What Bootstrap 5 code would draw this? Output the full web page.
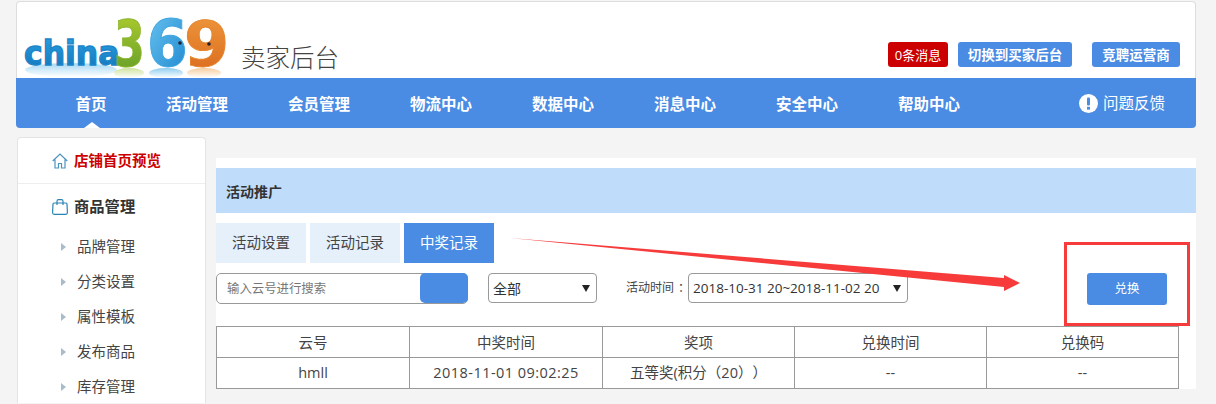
<!DOCTYPE html>
<html lang="zh"><head><meta charset="utf-8">
<link href="https://cdn.jsdelivr.net/npm/bootstrap@5.3.0/dist/css/bootstrap.min.css" rel="stylesheet">
<style>
html,body{height:404px;overflow:hidden}
body{background:#f4f4f4;font-family:"Open Sans","Noto Sans CJK SC",sans-serif;font-size:14.5px;color:#333}
.pagewrap{width:1180px;margin-left:16px;padding-top:1px;position:relative;height:404px;overflow:hidden}
.tophead{height:77px;background:#fff;border:1px solid #ddd;border-bottom:0;border-radius:4px 4px 0 0;padding-right:15px}
.logobox{width:216px;height:76px;flex:none}
.logobox svg{display:block}
.sellertitle{font-size:24.5px;font-weight:300;color:#444;line-height:30px;margin-top:41px;margin-left:8px}
.topbtn{height:25px;line-height:26px;border-radius:3px;color:#fff;font-size:13.5px;font-weight:700;background:#4a8be3;text-align:center}
.topbtns{margin-top:40px;margin-left:auto}
.bw1{width:60px;background:#cc0000;font-weight:400;font-size:13px}.bw2{width:114px;margin-left:10px}.bw3{width:88px;margin-left:20px}
.mainnav{height:50px;background:#4a8be3;border-radius:0 0 4px 4px;color:#fff;font-size:15.5px;font-weight:700;position:relative}
.navcell{width:122px;text-align:center;line-height:52px;position:relative}
.navcell.first{width:90px;margin-left:30px}
.navcell.first::after{content:"";position:absolute;left:38px;bottom:0;border:8px solid transparent;border-top:0;border-bottom:6px solid #fff}
.feedback{margin-left:auto;margin-right:31px;font-weight:400;display:flex;align-items:center;gap:5px;line-height:52px}
.bodyrow{margin-top:9px}
.sidepanel{width:189px;margin-left:1px;height:266px;background:#fff;border:1px solid #e4e4e4;border-bottom:0;border-radius:4px 4px 0 0;flex:none;overflow:hidden}
.sidehome{height:46px;border-bottom:1px solid #eee;padding-left:34px;color:#c00;font-weight:700;font-size:14.5px;display:flex;align-items:center;gap:6px}
.sidegroup{height:45px;padding-left:34px;color:#333;font-weight:700;font-size:15.3px;display:flex;align-items:center;gap:6px}
.sideitem{height:35px;padding-left:43px;display:flex;align-items:center;color:#444}
.sideitem::before{content:"";border:4px solid transparent;border-left:5px solid #a9bcca;border-right:0;margin-right:11px}
.mainpanel{width:980px;margin-left:10px;margin-top:21px;height:231px;background:#fff;padding-top:10px;flex:none;position:relative}
.titlebar{height:45px;background:#bfdcfb;line-height:47px;padding-left:10px;font-size:14px;font-weight:700;color:#333}
.tabrow{margin-top:10px;gap:4px;height:40px}
.tabitem{width:90px;height:40px;line-height:40px;text-align:center;background:#e6f0fb;color:#444}
.tabitem.on{background:#4a8be3;color:#fff}
.filterrow{margin-top:10px;height:31px;align-items:flex-start}
.searchbox{width:252px;height:31px;border:1px solid #999;border-radius:5px;position:relative;font-size:12.4px;color:#777;line-height:30px;padding-left:10px}
.searchbtn{position:absolute;right:-1px;top:-1px;width:48px;height:30px;background:#4a8be3;border-radius:5px}
.sel{height:30px;border:1px solid #999;border-radius:4px;background:#fff;line-height:29px;padding-left:4px;color:#333;position:relative;font-size:14px}
.sel::after{content:"";position:absolute;right:6px;top:11px;border:4px solid transparent;border-top:7px solid #222;border-bottom:0}
.sel1{width:109px;margin-left:20px}
.timelabel{margin-left:29px;font-size:12px;line-height:30px;color:#444;width:62px;white-space:nowrap}
.colonmark{margin-left:4px}
.sel2{width:220px;font-size:13.5px}
.exbtn{position:absolute;left:871px;top:115px;width:80px;height:32px;line-height:32px;background:#4a8be3;border-radius:3px;color:#fff;text-align:center;font-size:12.5px}
.datatable{margin-top:22px;width:962px;border-collapse:collapse;table-layout:fixed;text-align:center;color:#444;text-spacing-trim:space-all}
.datatable td{border:1px solid #999;height:31px;padding:0;vertical-align:middle}
.datatable tr:first-child td{padding-top:1px}
.widedigits{letter-spacing:.45px}
.markup{position:absolute;left:0;top:0;pointer-events:none}
.logotxt{font-family:"DejaVu Sans",sans-serif;font-weight:700}
</style></head><body>
<div class="pagewrap">
<div class="tophead d-flex">
 <div class="logobox">
 <svg width="216" height="84" viewBox="0 0 216 84">
  <defs>
   <linearGradient id="rf" x1="0" y1="0" x2="0" y2="1"><stop offset="0" stop-color="#8fcdf0"/><stop offset="1" stop-color="#fff"/></linearGradient>
   <linearGradient id="rg" x1="0" y1="0" x2="0" y2="1"><stop offset="0" stop-color="#cfe3a0"/><stop offset="1" stop-color="#fff"/></linearGradient>
   <linearGradient id="ro" x1="0" y1="0" x2="0" y2="1"><stop offset="0" stop-color="#f5cda0"/><stop offset="1" stop-color="#fff"/></linearGradient>
   <linearGradient id="cg" x1="0" y1="0" x2="0" y2="1"><stop offset="0" stop-color="#2aa2e2"/><stop offset="1" stop-color="#1272b8"/></linearGradient>
   <linearGradient id="g3" x1="0" y1="0" x2="0" y2="1"><stop offset="0" stop-color="#b5cf2d"/><stop offset="1" stop-color="#5c9a2a"/></linearGradient>
   <linearGradient id="g6" x1="0" y1="0" x2="1" y2="1"><stop offset="0" stop-color="#6cc5f0"/><stop offset="1" stop-color="#1c86cf"/></linearGradient>
   <linearGradient id="g9" x1="0" y1="0" x2="0" y2="1"><stop offset="0" stop-color="#ef9a3e"/><stop offset="1" stop-color="#d9671b"/></linearGradient>
  </defs>
  <ellipse cx="54" cy="68" rx="46" ry="7" fill="url(#rf)" opacity=".8"/>
  <ellipse cx="112" cy="71" rx="15" ry="5" fill="url(#rg)"/>
  <ellipse cx="149" cy="71" rx="17" ry="5" fill="url(#rf)"/>
  <ellipse cx="187" cy="71" rx="17" ry="5" fill="url(#ro)"/>
  <text class="logotxt" transform="translate(7,63) scale(.85,.9)" font-size="37" fill="url(#cg)" stroke="#1b86ca" stroke-width="1.500">china</text>
  <text class="logotxt" transform="translate(97,64) scale(.68,.98)" font-size="65" fill="url(#g3)" stroke="#8ab52c" stroke-width="1">3</text>
  <text class="logotxt" transform="translate(130,64) scale(.9,.98)" font-size="65" fill="url(#g6)" stroke="#3fa6e2" stroke-width="1">6</text>
  <text class="logotxt" transform="translate(167,64) scale(1,.96)" font-size="65" fill="url(#g9)" stroke="#e5832c" stroke-width="1">9</text>
  <circle cx="163" cy="41" r="1.800" fill="#223"/>
  <circle cx="192" cy="42" r="1.800" fill="#223"/>
 </svg>
 </div>
 <div class="sellertitle">卖家后台</div>
 <div class="topbtns d-flex">
  <div class="topbtn bw1">0条消息</div><div class="topbtn bw2">切换到买家后台</div><div class="topbtn bw3">竞聘运营商</div>
 </div>
</div>
<div class="mainnav d-flex">
 <div class="navcell first">首页</div><div class="navcell">活动管理</div><div class="navcell">会员管理</div><div class="navcell">物流中心</div><div class="navcell">数据中心</div><div class="navcell">消息中心</div><div class="navcell">安全中心</div><div class="navcell">帮助中心</div>
 <div class="feedback"><svg width="19" height="19" viewBox="0 0 19 19"><circle cx="9.5" cy="9.5" r="9.5" fill="#fff"/><rect x="8" y="3.5" width="3" height="8" rx="1" fill="#4a8be3"/><rect x="8" y="12.8" width="3" height="2.8" fill="#4a8be3"/></svg>问题反馈</div>
</div>
<div class="bodyrow d-flex align-items-start">
 <div class="sidepanel">
  <div class="sidehome"><svg width="16" height="16" viewBox="0 0 16 16" fill="none" stroke="#4d93bd" stroke-width="1.200"><path d="M.7 8 8 1l7.300 7M3 6.500V15h3.500v-4.500h3V15H13V6.500"/></svg>店铺首页预览</div>
  <div class="sidegroup"><svg width="16" height="16" viewBox="0 0 16 16" fill="none" stroke="#2a83b5" stroke-width="1.200"><path d="M2 4h12q.9 0 1 1l.4 8.500q0 1.800-1.500 1.800H2.100Q.6 15.300.6 13.500L1 5q.1-1 1-1zM5 6V2.200Q5 .7 6.500.7h3Q11 .7 11 2.200V6"/></svg>商品管理</div>
  <div class="sideitem">品牌管理</div><div class="sideitem">分类设置</div><div class="sideitem">属性模板</div><div class="sideitem">发布商品</div><div class="sideitem">库存管理</div>
 </div>
 <div class="mainpanel">
  <div class="titlebar">活动推广</div>
  <div class="tabrow d-flex"><div class="tabitem">活动设置</div><div class="tabitem">活动记录</div><div class="tabitem on">中奖记录</div></div>
  <div class="filterrow d-flex">
   <div class="searchbox">输入云号进行搜索<div class="searchbtn"></div></div>
   <div class="sel sel1">全部</div>
   <div class="timelabel">活动时间<span class="colonmark">：</span></div>
   <div class="sel sel2">2018-10-31 20~2018-11-02 20</div>
  </div>
  <div class="exbtn">兑换</div>
  <table class="datatable">
   <colgroup><col style="width:193px"><col style="width:193px"><col style="width:192px"><col style="width:192px"><col style="width:192px"></colgroup>
   <tbody>
   <tr><td>云号</td><td>中奖时间</td><td>奖项</td><td>兑换时间</td><td>兑换码</td></tr>
   <tr><td>hmll</td><td class="widedigits">2018-11-01 09:02:25</td><td>五等奖(积分（20））</td><td>--</td><td>--</td></tr>
  </tbody></table>
 </div>
</div>
<svg class="markup" width="1180" height="404" viewBox="16 0 1180 404">
 <polygon points="510,238 1004,278 1004,275 1020,283 1004,291 1004,287" fill="#f73b3b"/>
 <rect x="1065.500" y="243.500" width="123" height="81" fill="none" stroke="#f73b3b" stroke-width="3"/>
</svg>
</div>
<script src="https://cdn.jsdelivr.net/npm/bootstrap@5.3.0/dist/js/bootstrap.bundle.min.js"></script>
</body></html>
